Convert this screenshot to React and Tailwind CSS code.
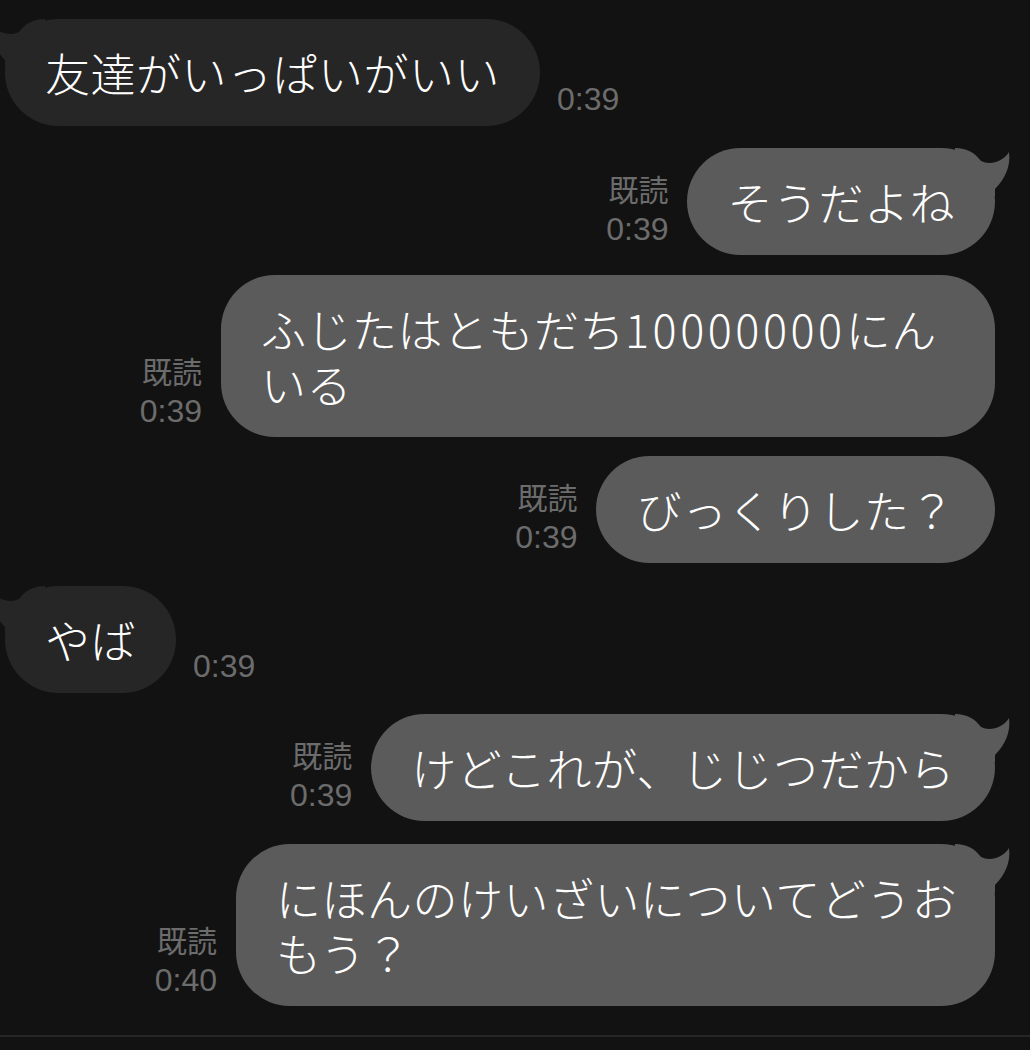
import React from "react";

const JP = { fontFamily: '"Noto Sans CJK JP", "Noto Sans", sans-serif' };
const LAT = { fontFamily: '"Liberation Sans", Arial, sans-serif' };

function Tail({ color, side }) {
  const pos =
    side === "right"
      ? "left-[calc(100%-40px)]"
      : "right-[calc(100%-40px)] -scale-x-100";
  return (
    <svg
      className={`absolute top-[-2px] ${pos}`}
      width="56"
      height="50"
      viewBox="0 0 56 50"
    >
      <path
        d="M0 2 C12 2 20 7 26 15 C34 19 47 17 54 6 C56 20 50 33 40 43 L40 50 L0 50 Z"
        fill={color}
      />
    </svg>
  );
}

function Bubble({ side, tail, children, w }) {
  const color = side === "right" ? "#5b5b5b" : "#262626";
  return (
    <div
      className={`relative rounded-[54px] px-[40px] py-[26px] text-[45px] font-light leading-[55px] tracking-[0.5px] text-white whitespace-nowrap ${
        side === "right" ? "bg-[#5b5b5b]" : "bg-[#262626]"
      } ${w || ""}`}
      style={JP}
    >
      {tail && <Tail color={color} side={side} />}
      <div className="relative">{children}</div>
    </div>
  );
}

function Right({ time, tail, children, w, mt }) {
  return (
    <div className={`flex items-end justify-end gap-[19px] pr-[35px] ${mt}`}>
      <div className="flex flex-col items-end mb-[8px] text-[#6c6c6c]">
        <span className="text-[30px] leading-[36px] mb-[5px]" style={JP}>
          既読
        </span>
        <span className="text-[32px] leading-[36px]" style={LAT}>
          {time}
        </span>
      </div>
      <Bubble side="right" tail={tail} w={w}>
        {children}
      </Bubble>
    </div>
  );
}

function Left({ time, children, mt }) {
  return (
    <div className={`flex items-end gap-[17px] pl-[5px] ${mt}`}>
      <Bubble side="left" tail>
        {children}
      </Bubble>
      <span
        className="mb-[9px] text-[32px] leading-[36px] text-[#6c6c6c]"
        style={LAT}
      >
        {time}
      </span>
    </div>
  );
}

export default function App() {
  return (
    <div className="w-[1030px] h-[1050px] bg-[#121212] overflow-hidden flex flex-col">
      <Left time="0:39" mt="mt-[19px]">
        友達がいっぱいがいい
      </Left>
      <Right time="0:39" tail mt="mt-[22px]">
        そうだよね
      </Right>
      <Right time="0:39" mt="mt-[20px]" w="w-[774px]">
        ふじたはともだち
        <span className="tracking-[3.5px]">10000000</span>にん
        <br />
        いる
      </Right>
      <Right time="0:39" mt="mt-[19px]">
        びっくりした？
      </Right>
      <Left time="0:39" mt="mt-[23px]">
        やば
      </Left>
      <Right time="0:39" tail mt="mt-[21px]">
        けどこれが、じじつだから
      </Right>
      <Right time="0:40" tail mt="mt-[23px]" w="w-[759px]">
        にほんのけいざいについてどうお
        <br />
        もう？
      </Right>
      <div className="mt-[29px] h-[2px] bg-[#262626]" />
    </div>
  );
}
